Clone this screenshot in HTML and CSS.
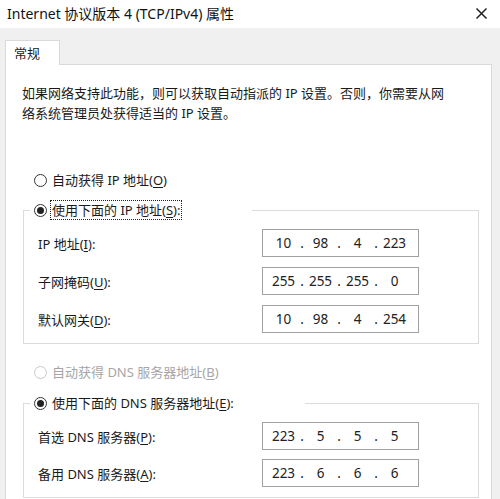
FILE: index.html
```html
<!DOCTYPE html>
<html lang="zh-CN">
<head>
<meta charset="utf-8">
<title>Internet 协议版本 4 (TCP/IPv4) 属性</title>
<link rel="stylesheet" href="styles.css">
</head>
<body>
<div class="window">
  <div class="titlebar">
    <span class="title">Internet 协议版本 4 (TCP/IPv4) 属性</span>
    <span class="close-btn"><svg class="close-icon" width="13" height="13" viewBox="0 0 13 13"><path d="M1.5 1.5L11.5 11.5M11.5 1.5L1.5 11.5" stroke="#222222" stroke-width="1.5" fill="none"/></svg></span>
  </div>
  <div class="body">
    <div class="tabs"><div class="tab">常规</div></div>
    <div class="panel">
      <p class="intro">如果网络支持此功能，则可以获取自动指派的 IP 设置。否则，你需要从网<br>络系统管理员处获得适当的 IP 设置。</p>

      <div class="radio-row auto-ip">
        <span class="radio"></span>
        <span class="radio-label">自动获得 IP 地址(<u>O</u>)</span>
      </div>
      <fieldset class="group ip-group">
        <legend class="legend legend-ip">
          <span class="radio checked"></span>
          <span class="radio-label focus">使用下面的 IP 地址(<u>S</u>):</span>
        </legend>
        <div class="field">
          <span class="field-label">IP 地址(<u>I</u>):</span>
          <div class="ipbox"><span class="seg">10</span><span class="dot">.</span><span class="seg">98</span><span class="dot">.</span><span class="seg">4</span><span class="dot">.</span><span class="seg">223</span></div>
        </div>
        <div class="field">
          <span class="field-label">子网掩码(<u>U</u>):</span>
          <div class="ipbox"><span class="seg">255</span><span class="dot">.</span><span class="seg">255</span><span class="dot">.</span><span class="seg">255</span><span class="dot">.</span><span class="seg">0</span></div>
        </div>
        <div class="field">
          <span class="field-label">默认网关(<u>D</u>):</span>
          <div class="ipbox"><span class="seg">10</span><span class="dot">.</span><span class="seg">98</span><span class="dot">.</span><span class="seg">4</span><span class="dot">.</span><span class="seg">254</span></div>
        </div>
      </fieldset>

      <div class="radio-row auto-dns disabled">
        <span class="radio"></span>
        <span class="radio-label">自动获得 DNS 服务器地址(<u>B</u>)</span>
      </div>
      <fieldset class="group dns-group">
        <legend class="legend legend-dns">
          <span class="radio checked"></span>
          <span class="radio-label plain">使用下面的 DNS 服务器地址(<u>E</u>):</span>
        </legend>
        <div class="field">
          <span class="field-label">首选 DNS 服务器(<u>P</u>):</span>
          <div class="ipbox"><span class="seg">223</span><span class="dot">.</span><span class="seg">5</span><span class="dot">.</span><span class="seg">5</span><span class="dot">.</span><span class="seg">5</span></div>
        </div>
        <div class="field">
          <span class="field-label">备用 DNS 服务器(<u>A</u>):</span>
          <div class="ipbox"><span class="seg">223</span><span class="dot">.</span><span class="seg">6</span><span class="dot">.</span><span class="seg">6</span><span class="dot">.</span><span class="seg">6</span></div>
        </div>
      </fieldset>
    </div>
  </div>
</div>
</body>
</html>
```

FILE: styles.css
```css
* { box-sizing: border-box; }
html, body {
  margin: 0;
  padding: 0;
}
body {
  width: 500px;
  height: 499px;
  overflow: hidden;
  background: #f0f0f0;
  font-family: "Noto Sans", "Noto Sans CJK SC", sans-serif;
  font-size: 13px;
  color: #1a1a1a;
}
.window {
  width: 500px;
  height: 499px;
  display: flex;
  flex-direction: column;
}
.titlebar {
  height: 28px;
  background: #ffffff;
  display: flex;
  align-items: center;
  padding: 0 4px 2px 7px;
  flex: none;
}
.title {
  font-size: 14px;
  color: #111;
  white-space: nowrap;
  flex: 1;
}
.close-btn {
  width: 30px;
  height: 26px;
  flex: none;
  display: flex;
  align-items: center;
  justify-content: center;
}
.close-icon { width: 13px; height: 13px; display: block; }
.body {
  flex: 1;
  display: flex;
  flex-direction: column;
  padding: 12px 8px 0 5px;
}
.tabs {
  display: flex;
  height: 24px;
  flex: none;
}
.tab {
  position: relative;
  z-index: 1;
  width: 55px;
  height: 25px;
  background: #ffffff;
  border: 1px solid #d9d9d9;
  border-bottom: none;
  padding: 3px 0 0 8px;
  line-height: 18px;
}
.panel {
  flex: 1;
  background: #ffffff;
  border: 1px solid #d9d9d9;
  border-bottom: none;
  padding: 18px 12px 0 16px;
}
.intro {
  margin: 0;
  line-height: 20px;
  white-space: nowrap;
}
.radio-row {
  display: flex;
  align-items: center;
  height: 20px;
  padding-left: 12px;
}
.auto-ip { margin-top: 47px; }
.auto-dns { margin-top: 18px; }
.radio {
  width: 13px;
  height: 13px;
  border: 1px solid #333;
  border-radius: 50%;
  flex: none;
  display: flex;
  align-items: center;
  justify-content: center;
  background: #fff;
}
.radio.checked::after {
  content: "";
  width: 7px;
  height: 7px;
  border-radius: 50%;
  background: #222;
}
.radio-label {
  margin-left: 5px;
  line-height: 18px;
}
.disabled { color: #a6a6a6; }
.disabled .radio { border-color: #c8c8c8; }
.group {
  margin: 10px 0 0 1px;
  width: 456px;
  border: 1px solid #dcdcdc;
  padding: 9px 0 10px 6px;
}
.dns-group { margin-top: 11px; }
.legend {
  display: flex;
  align-items: center;
  height: 20px;
  padding: 0 0 0 4px;
  background: #fff;
}
.legend-ip { width: 222px; }
.legend-dns { width: 275px; }
.legend .radio-label { margin-left: 3px; padding: 0 1px; border: 1px dotted transparent; }
.legend .radio-label.focus { border-color: #222; }
.field {
  display: flex;
  align-items: center;
  height: 28px;
  padding-left: 8px;
}
.field + .field { margin-top: 10px; }
.dns-group .field + .field { margin-top: 9px; }
.field-label {
  width: 224px;
  flex: none;
}
.ipbox {
  width: 157px;
  height: 28px;
  border: 1px solid #a0a0a0;
  display: flex;
  align-items: center;
  padding-left: 6px;
  font-size: 13.5px;
  color: #222;
}
.seg {
  width: 29px;
  text-align: center;
}
.dot {
  width: 8px;
  text-align: center;
}
u { text-decoration-thickness: 1px; text-underline-offset: 2px; }
```
